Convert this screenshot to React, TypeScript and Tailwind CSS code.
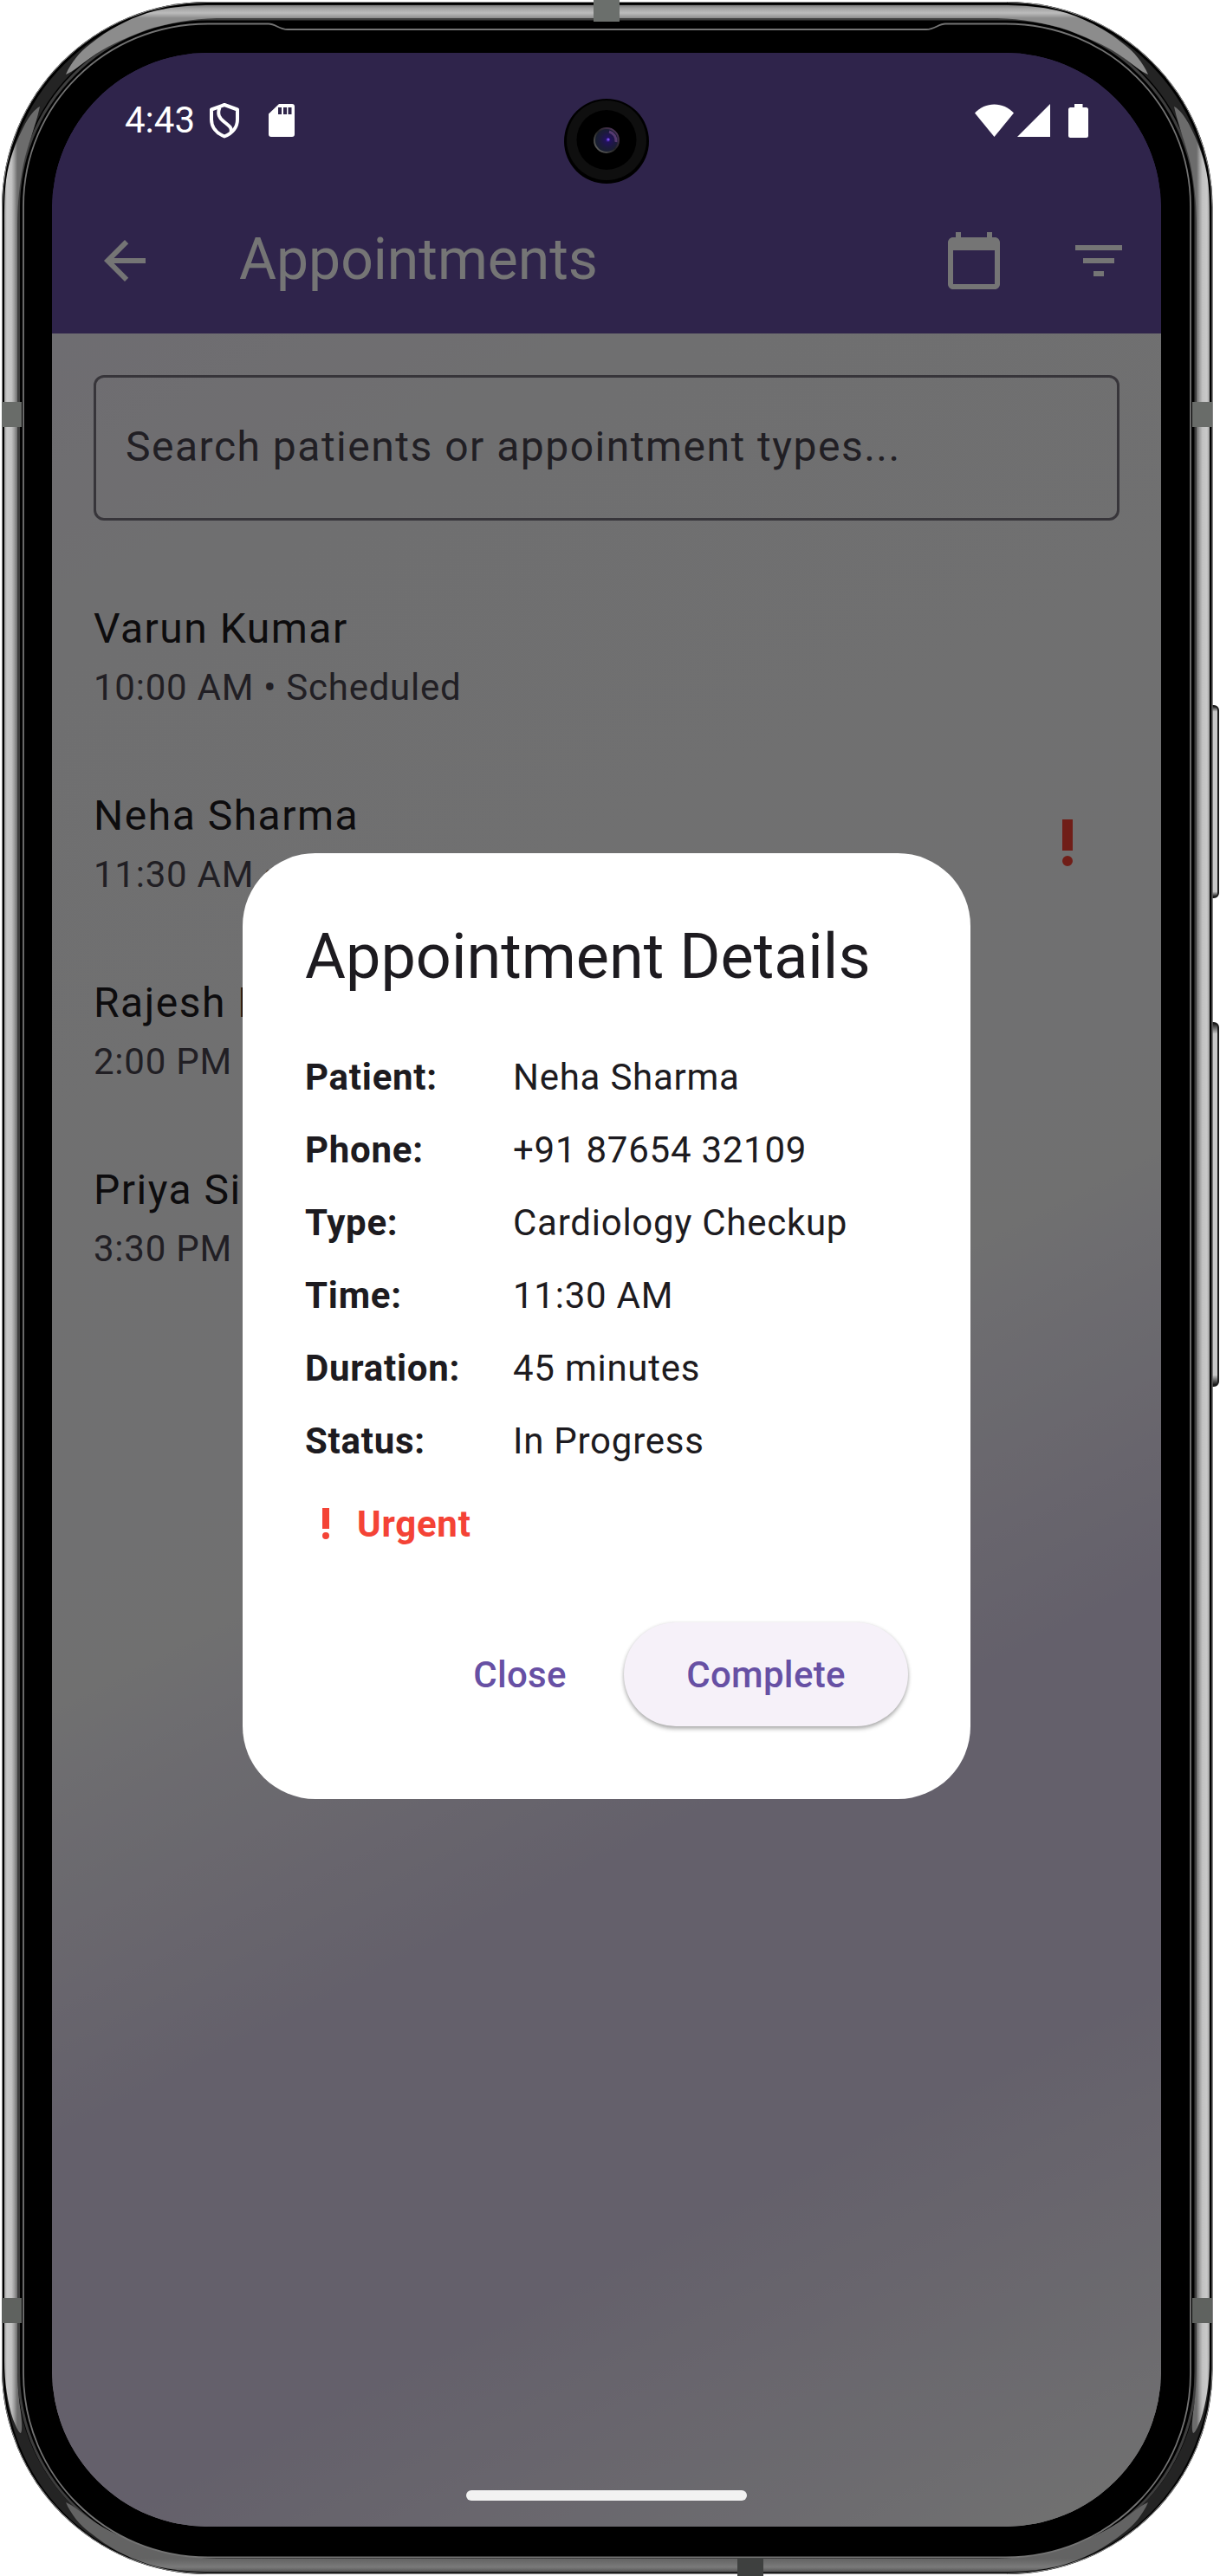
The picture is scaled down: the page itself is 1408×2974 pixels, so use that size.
import React from "react";

type Appointment = { name: string; time: string; status: string; urgent?: boolean };

const appointments: Appointment[] = [
  { name: "Varun Kumar", time: "10:00 AM", status: "Scheduled" },
  { name: "Neha Sharma", time: "11:30 AM", status: "In Progress", urgent: true },
  { name: "Rajesh Kumar", time: "2:00 PM", status: "Scheduled" },
  { name: "Priya Singh", time: "3:30 PM", status: "Completed" },
];

const details: [string, string][] = [
  ["Patient:", "Neha Sharma"],
  ["Phone:", "+91 87654 32109"],
  ["Type:", "Cardiology Checkup"],
  ["Time:", "11:30 AM"],
  ["Duration:", "45 minutes"],
  ["Status:", "In Progress"],
];

function Icon({ d, className }: { d: string; className: string }) {
  return (
    <svg viewBox="0 0 24 24" fill="currentColor" className={className}>
      <path d={d} />
    </svg>
  );
}

const ARROW_BACK = "M20 11H7.83l5.59-5.59L12 4l-8 8 8 8 1.41-1.41L7.83 13H20v-2z";
const CALENDAR =
  "M20 3h-1V1h-2v2H7V1H5v2H4c-1.1 0-2 .9-2 2v16c0 1.1.9 2 2 2h16c1.1 0 2-.9 2-2V5c0-1.1-.9-2-2-2zm0 18H4V8h16v13z";
const FILTER = "M10 18h4v-2h-4v2zM3 6v2h18V6H3zm3 7h12v-2H6v2z";
const PRIORITY = "M10 3h4v12h-4zM12 17a2 2 0 1 0 0 4a2 2 0 1 0 0-4z";

/* Polished highlights on the left half of the metal band; mirrored for the right half. */
const TOP_SHINE =
  "M76 86C82 72 92 60 104 51C125 34 146 23 170 15C195 8 215 6 250 6H702V21H250C222 22 195 26 168 35C140 46 122 54 104 67C94 74 84 83 76 86Z";
const UPPER_SIDE_SHINE =
  "M46 123C40 126 34 134 29 143C17 166 10 186 7 208C5 224 5 240 5 262V1488H20V262C20 238 22 216 27 190C32 166 40 150 46 123Z";
const LOWER_SIDE_SHINE =
  "M5 1487V2725C5 2750 9 2775 15 2793C19 2803 22 2809 24 2809C26 2806 25 2795 24 2785C21 2765 20 2750 20 2725V1487Z";

function DeviceFrame() {
  return (
    <svg
      viewBox="0 0 1408 2974"
      fill="none"
      className="pointer-events-none absolute inset-0 h-[2974px] w-[1408px]"
    >
      <defs>
        <linearGradient id="topMetal" gradientUnits="userSpaceOnUse" x1="0" y1="6" x2="0" y2="21">
          <stop offset="0" stopColor="#7d7d7d" />
          <stop offset="0.25" stopColor="#a4a4a4" />
          <stop offset="0.6" stopColor="#bcbcbc" />
          <stop offset="1" stopColor="#8c8c8c" />
        </linearGradient>
        <linearGradient id="bottomMetal" gradientUnits="userSpaceOnUse" x1="0" y1="6" x2="0" y2="21">
          <stop offset="0" stopColor="#555" />
          <stop offset="0.35" stopColor="#7a7a7a" />
          <stop offset="1" stopColor="#636363" />
        </linearGradient>
        <linearGradient id="sideMetal" gradientUnits="userSpaceOnUse" x1="5" y1="0" x2="20" y2="0">
          <stop offset="0" stopColor="#9a9a9a" />
          <stop offset="0.2" stopColor="#c9c9c9" />
          <stop offset="0.55" stopColor="#c2c2c2" />
          <stop offset="0.75" stopColor="#a2a2a2" />
          <stop offset="1" stopColor="#6c6c6c" />
        </linearGradient>
        <linearGradient id="key" x1="0" y1="0" x2="0" y2="1">
          <stop offset="0" stopColor="#111" />
          <stop offset="0.03" stopColor="#c8c8c8" />
          <stop offset="0.97" stopColor="#c8c8c8" />
          <stop offset="1" stopColor="#000" />
        </linearGradient>
      </defs>
      {/* side keys */}
      <rect x="1392" y="815" width="14" height="221" rx="5" fill="url(#key)" stroke="#1c1c1c" strokeWidth="2" />
      <rect x="1392" y="1181" width="14" height="419" rx="5" fill="url(#key)" stroke="#1c1c1c" strokeWidth="2" />
      {/* metal band */}
      <rect x="2" y="2" width="1397.5" height="2970" rx="237" fill="#000" />
      <rect x="2.5" y="2.5" width="1396.5" height="2969" rx="236.500" stroke="#8e8e8e" />
      <rect x="21.5" y="22" width="1358.500" height="2934.500" rx="218" stroke="#3e3e3e" strokeWidth="3" />
      <rect x="12" y="12" width="1377.500" height="2952" rx="228" stroke="#242424" strokeWidth="13" />
      <path d={TOP_SHINE} fill="url(#topMetal)" />
      <path d={TOP_SHINE} fill="url(#topMetal)" transform="matrix(-1 0 0 1 1401 0)" />
      <path d={TOP_SHINE} fill="url(#bottomMetal)" transform="matrix(1 0 0 -1 0 2975)" />
      <path d={TOP_SHINE} fill="url(#bottomMetal)" transform="matrix(-1 0 0 -1 1401 2975)" />
      <path d={UPPER_SIDE_SHINE} fill="url(#sideMetal)" />
      <path d={UPPER_SIDE_SHINE} fill="url(#sideMetal)" transform="matrix(-1 0 0 1 1401 0)" />
      <path d={LOWER_SIDE_SHINE} fill="url(#sideMetal)" />
      <path d={LOWER_SIDE_SHINE} fill="url(#sideMetal)" transform="matrix(-1 0 0 1 1401 0)" />
      {/* bezel with the earpiece notch along the top edge */}
      <path
        d="M240 27.500H310C318 27.500 322 34 332 34H1069C1079 34 1083 27.500 1091 27.500H1161C1279 27.500 1374 121 1374 238V2740C1374 2858 1279 2952.500 1161 2952.500H240C122 2952.500 27 2858 27 2740V238C27 121 122 27.500 240 27.500Z"
        fill="#000"
        stroke="#747474"
        strokeWidth="1.800"
      />
      {/* antenna breaks */}
      <rect x="685" y="0" width="30" height="25" fill="#6b6f6c" />
      <rect x="851" y="2953" width="30" height="21" fill="#3e403f" />
      <rect x="2" y="464" width="23" height="29" fill="#696c69" />
      <rect x="1376" y="464" width="23" height="29" fill="#696c69" />
      <rect x="2" y="2653" width="23" height="29" fill="#5f625f" />
      <rect x="1376" y="2653" width="23" height="29" fill="#5f625f" />
    </svg>
  );
}

function FrontCamera() {
  return (
    <svg viewBox="0 0 98 98" className="absolute top-[53px] left-[591px] h-[98px] w-[98px]">
      <defs>
        <radialGradient id="lens" cx="0.56" cy="0.48" r="0.55">
          <stop offset="0" stopColor="#4a2ab0" />
          <stop offset="0.2" stopColor="#21125a" />
          <stop offset="0.6" stopColor="#1c1a3c" />
          <stop offset="1" stopColor="#17202c" />
        </radialGradient>
        <linearGradient id="lensRim" x1="0" y1="1" x2="1" y2="0">
          <stop offset="0" stopColor="#6b6b6b" />
          <stop offset="0.5" stopColor="#222" />
          <stop offset="1" stopColor="#5a3a68" />
        </linearGradient>
      </defs>
      <circle cx="49" cy="49" r="49" fill="#000" />
      <circle cx="49" cy="48" r="46" fill="#0f0f0f" />
      <circle cx="49" cy="47.500" r="34.500" fill="#000" />
      <circle cx="49" cy="48" r="14" fill="url(#lens)" stroke="url(#lensRim)" strokeWidth="2" />
      <path d="M52 38A11 11 0 0 1 60 50" fill="none" stroke="#7d4f93" strokeWidth="3" opacity="0.6" />
      <circle cx="51" cy="47" r="1.500" fill="#7a4df0" />
    </svg>
  );
}

function StatusBar() {
  return (
    <div className="absolute inset-x-0 top-0 flex h-[156px] items-center pr-[84px] pl-[84px] text-white">
      <span className="text-[42px] leading-[60px]">4:43</span>
      <svg
        viewBox="0 0 36 42"
        fill="none"
        stroke="currentColor"
        strokeWidth="4"
        strokeLinejoin="round"
        className="ml-[16px] h-[42px] w-[36px]"
      >
        <path d="M18 3L33 8.500V20C33 28 28 35.500 18 39.500C8 35.500 3 28 3 20V8.500Z" />
        <path d="M12.500 6C9.500 14 12 18 17.500 22.500C23 27 27 29 25.500 35" />
      </svg>
      <svg viewBox="0 0 30 38" className="ml-[33px] h-[38px] w-[30px]">
        <path d="M12 0H27A3 3 0 0 1 30 3V35A3 3 0 0 1 27 38H3A3 3 0 0 1 0 35V11.500Z" fill="currentColor" />
        <path d="M11 4h4v8h-4zM17 4h4v8h-4zM22.500 4h4v8h-4z" fill="#2f254a" />
      </svg>
      <svg viewBox="0 0 45 38" fill="currentColor" className="ml-auto h-[38px] w-[45px]">
        <path d="M0 10.500C6 4 14 .5 22.500 .5S39 4 45 10.500L22.500 38Z" />
      </svg>
      <svg viewBox="0 0 38 38" fill="currentColor" className="ml-[4px] h-[38px] w-[38px]">
        <path d="M38 0V38H0Z" />
      </svg>
      <svg viewBox="0 0 23 39" fill="currentColor" className="ml-[21px] h-[39px] w-[23px]">
        <path d="M7 0H16.500V4H20.500A2.500 2.500 0 0 1 23 6.500V36.500A2.500 2.500 0 0 1 20.500 39H2.500A2.500 2.500 0 0 1 0 36.500V6.500A2.500 2.500 0 0 1 2.500 4H7Z" />
      </svg>
    </div>
  );
}

function AppBar() {
  return (
    <header className="flex h-[324px] items-center bg-[#6750a4] pt-[156px] text-white">
      <div className="flex w-[168px] justify-center">
        <Icon d={ARROW_BACK} className="h-[72px] w-[72px]" />
      </div>
      <h1 className="ml-[48px] flex-1 pb-[2px] text-[66px] leading-[84px]">Appointments</h1>
      <div className="flex w-[144px] justify-center">
        <Icon d={CALENDAR} className="h-[72px] w-[72px]" />
      </div>
      <div className="flex w-[144px] justify-center">
        <Icon d={FILTER} className="h-[72px] w-[72px]" />
      </div>
    </header>
  );
}

function AppointmentTile({ name, time, status, urgent }: Appointment) {
  return (
    <li className="flex h-[216px] items-center pr-[72px] pl-[48px]">
      <div className="flex-1">
        <div className="mb-[2px] text-[48px] leading-[72px] tracking-[1.5px] text-[#1d1b20]">{name}</div>
        <div className="text-[42px] leading-[60px] tracking-[0.75px] text-[#49454f]">
          {time} • {status}
        </div>
      </div>
      {urgent && <Icon d={PRIORITY} className="h-[72px] w-[72px] text-[#f44336]" />}
    </li>
  );
}

function DetailsDialog() {
  return (
    <section className="flex w-[840px] flex-col rounded-[84px] bg-white p-[72px] text-[#1d1b20]">
      <h2 className="text-[72px] leading-[96px] whitespace-nowrap">Appointment Details</h2>
      <dl className="mt-[49px] -mb-px text-[42px] leading-[60px] tracking-[0.75px]">
        {details.map(([label, value]) => (
          <div key={label} className="flex py-[12px]">
            <dt className="w-[240px] font-bold">{label}</dt>
            <dd>{value}</dd>
          </div>
        ))}
      </dl>
      <div className="mt-[24px] flex h-[60px] items-center gap-[12px] text-[#f44336]">
        <Icon d={PRIORITY} className="h-[48px] w-[48px]" />
        <span className="pt-[2px] text-[42px] leading-[60px] font-bold tracking-[0.75px]">Urgent</span>
      </div>
      <div className="mt-[72px] flex h-[144px] items-center justify-end gap-[24px] text-[42px] leading-[60px] font-medium tracking-[0.3px] text-[#6750a4]">
        <button className="h-[120px] w-[192px] pt-[2px]">Close</button>
        <button className="h-[120px] w-[328px] rounded-full bg-[#f6f1f9] pt-[2px] shadow-[0_3px_5px_rgba(0,0,0,0.28),0_1px_4px_rgba(0,0,0,0.12)]">
          Complete
        </button>
      </div>
    </section>
  );
}

export default function App() {
  return (
    <div className="relative h-[2974px] w-[1408px] overflow-hidden bg-white pt-[61px] pl-[60px] font-['Roboto',sans-serif]">
      <DeviceFrame />
      <main className="relative h-[2856px] w-[1280px] overflow-hidden rounded-[180px]">
        <div className="flex h-full flex-col">
          <AppBar />
          <div className="flex-1 bg-[linear-gradient(153.18deg,#f0edf6_0%,#f2f2f5_12%,#f4f4f6_45%,#f3f3f5_50%,#dad1e9_66%,#dad1e9_80%,#f4f4f5_98%)] pt-[48px]">
            <div className="mx-[48px] mb-[48px] flex h-[168px] items-center rounded-[12px] border-[3px] border-[#79747e] px-[34px] pb-[2px] text-[48px] leading-[72px] tracking-[1.5px] text-[#49454f]">
              Search patients or appointment types...
            </div>
            <ul>
              {appointments.map((a) => (
                <AppointmentTile key={a.name} {...a} />
              ))}
            </ul>
          </div>
        </div>
        {/* modal barrier */}
        <div className="absolute inset-0 flex items-start justify-center bg-[rgba(0,0,0,0.541)] pt-[924px]">
          <DetailsDialog />
        </div>
        <StatusBar />
        <FrontCamera />
        <div className="absolute bottom-[30px] left-[478px] h-[12px] w-[324px] rounded-full bg-[#f2f2f2]" />
      </main>
    </div>
  );
}
